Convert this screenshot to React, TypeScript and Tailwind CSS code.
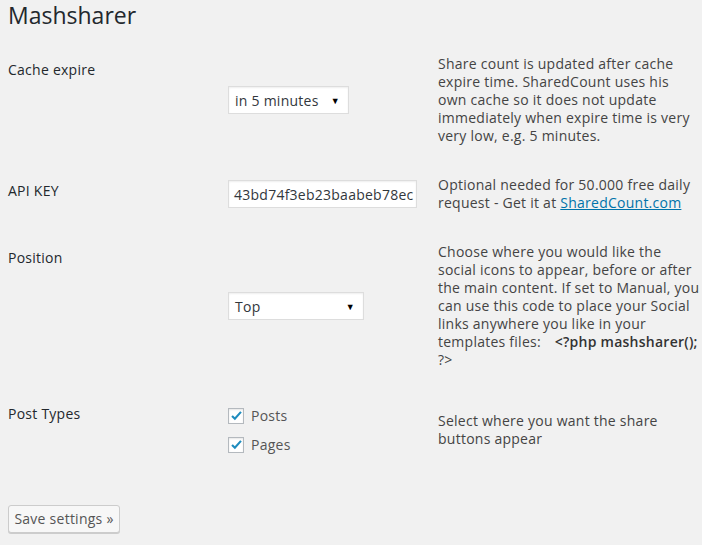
import React from "react";

const font = { fontFamily: '"Open Sans", "Liberation Sans", sans-serif' };

function FakeSelect({ value, width }: { value: string; width: string }) {
  return (
    <div
      className={`${width} h-[28px] bg-white border border-[#ddd] shadow-[inset_0_1px_2px_rgba(0,0,0,0.07)] flex items-center justify-between pl-[6px] pr-[8px] text-[14px] text-[#32373c]`}
    >
      <span>{value}</span>
      <span className="text-[9px] text-black leading-none">▼</span>
    </div>
  );
}

function Check({ label }: { label: string }) {
  return (
    <label className="flex items-center gap-[7px] h-[29px] text-[14px] text-[#555]">
      <span className="w-[16px] h-[16px] bg-white border border-[#b4b9be] flex items-center justify-center shadow-[inset_0_1px_2px_rgba(0,0,0,0.1)]">
        <svg viewBox="0 0 16 16" className="w-[13px] h-[13px]">
          <path d="M2.5 8.5 L6 12 L13.5 3.5" fill="none" stroke="#1e8cbe" strokeWidth="2.6" />
        </svg>
      </span>
      {label}
    </label>
  );
}

function Row({
  label,
  control,
  desc,
  pad = "py-[15px]",
}: {
  label: string;
  control: React.ReactNode;
  desc: React.ReactNode;
  pad?: string;
}) {
  return (
    <div className={`flex items-center ${pad}`}>
      <div className="w-[220px] self-start pt-[5px] text-[14px] leading-[20px] font-medium text-[#23282d]">
        {label}
      </div>
      <div className="w-[210px]">{control}</div>
      <div className="w-[264px] text-[14px] leading-[18px] text-[#444]">{desc}</div>
    </div>
  );
}

export default function App() {
  return (
    <div className="min-h-screen bg-[#f1f1f1] pl-[8px] pt-[1px] tracking-[0.25px]" style={font}>
      <h1 className="text-[23px] leading-[29px] text-[#23282d] font-normal tracking-normal">Mashsharer</h1>

      <div className="mt-[10px]">
        <Row
          label="Cache expire"
          control={<FakeSelect value="in 5 minutes" width="w-[121px]" />}
          desc={
            <>
              Share count is updated after cache expire time. SharedCount uses his
              <br />
              own cache so it does not update immediately when expire time is very very low, e.g.
              5 minutes.
            </>
          }
        />
        <Row
          label="API KEY"
          pad="py-[16px]"
          control={
            <div className="w-[189px] h-[28px] bg-white border border-[#ddd] shadow-[inset_0_1px_2px_rgba(0,0,0,0.07)] flex items-center pl-[5px] overflow-hidden whitespace-nowrap text-[14px] text-[#32373c]">
              43bd74f3eb23baabeb78ec
            </div>
          }
          desc={
            <>
              Optional needed for 50.000 free daily request - Get it at{" "}
              <a href="#" className="text-[#0073aa] underline">
                SharedCount.com
              </a>
            </>
          }
        />
        <Row
          label="Position"
          control={<FakeSelect value="Top" width="w-[136px]" />}
          desc={
            <>
              Choose where you would like the social icons to appear, before or after the main
              content. If set to Manual, you can use this code to place your Social links anywhere
              you like in your templates files:{" "}
              <span className="font-semibold text-[#333] pl-[10px]">&lt;?php&nbsp;mashsharer();</span> ?&gt;
            </>
          }
        />
        <Row
          label="Post Types"
          control={
            <div className="flex flex-col py-[2px]">
              <Check label="Posts" />
              <Check label="Pages" />
            </div>
          }
          desc="Select where you want the share buttons appear"
        />
      </div>

      <button className="mt-[29px] h-[28px] w-[112px] bg-[#f7f7f7] border border-[#ccc] rounded-[3px] shadow-[0_1px_0_#ccc] text-[14px] text-[#555] leading-[26px]">
        Save settings »
      </button>
    </div>
  );
}
